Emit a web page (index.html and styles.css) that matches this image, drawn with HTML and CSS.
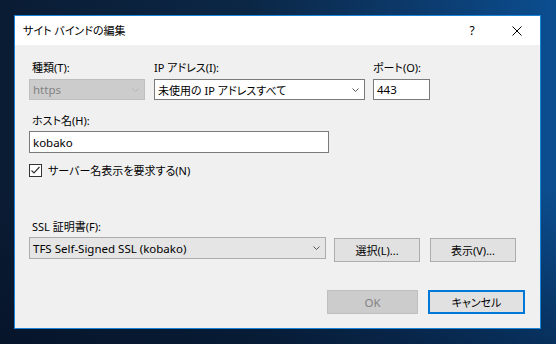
FILE: index.html
```html
<!DOCTYPE html>
<html lang="ja">
<head>
<meta charset="utf-8">
<title>サイト バインドの編集</title>
<link rel="stylesheet" href="styles.css">
</head>
<body>
<div class="desktop">
  <div class="dialog">
    <div class="titlebar">
      <span class="title">サイト バインドの編集</span>
      <span class="cap-btn help">?</span>
      <span class="cap-btn close">
        <svg width="10" height="10" viewBox="0 0 10 10"><path d="M0.5 0.5 L9.5 9.5 M9.5 0.5 L0.5 9.5" stroke="#000" stroke-width="1" fill="none"/></svg>
      </span>
    </div>
    <div class="content">
      <div class="row1">
        <div class="field f-kind">
          <div class="label indent">種類(T):</div>
          <div class="combo disabled">
            <span class="latin">https</span>
            <svg class="chev" width="7" height="4" viewBox="0 0 7 4"><polyline points="0.5,0.5 3.5,3.5 6.5,0.5" fill="none" stroke="#b4b4b4" stroke-width="1"/></svg>
          </div>
        </div>
        <div class="field f-ip">
          <div class="label">IP アドレス(I):</div>
          <div class="combo edit">
            <span>未使用の IP アドレスすべて</span>
            <svg class="chev" width="7" height="4" viewBox="0 0 7 4"><polyline points="0.5,0.5 3.5,3.5 6.5,0.5" fill="none" stroke="#555" stroke-width="1"/></svg>
          </div>
        </div>
        <div class="field f-port">
          <div class="label">ポート(O):</div>
          <div class="textbox small latin">443</div>
        </div>
      </div>

      <div class="label indent host-label">ホスト名(H):</div>
      <div class="textbox host latin">kobako</div>

      <div class="check-row">
        <span class="checkbox">
          <svg width="11" height="11" viewBox="0 0 11 11"><polyline points="1.5,5.5 4,8 9.5,2" fill="none" stroke="#333" stroke-width="1.2"/></svg>
        </span>
        <span class="check-text">サーバー名表示を要求する(N)</span>
      </div>

      <div class="label indent ssl-label">SSL 証明書(F):</div>
      <div class="ssl-row">
        <div class="combo readonly">
          <span class="latin">TFS Self-Signed SSL (kobako)</span>
          <svg class="chev" width="7" height="4" viewBox="0 0 7 4"><polyline points="0.5,0.5 3.5,3.5 6.5,0.5" fill="none" stroke="#555" stroke-width="1"/></svg>
        </div>
        <button class="btn btn-select">選択(L)...</button>
        <button class="btn btn-view">表示(V)...</button>
      </div>

      <div class="footer">
        <button class="btn btn-ok latin" disabled>OK</button>
        <button class="btn btn-cancel">キャンセル</button>
      </div>
    </div>
  </div>
</div>
</body>
</html>
```

FILE: styles.css
```css
html, body {
  margin: 0;
  padding: 0;
}

body {
  width: 556px;
  height: 344px;
  overflow: hidden;
  font-family: "Noto Sans", "Noto Sans CJK JP", sans-serif;
  font-size: 11px;
  font-feature-settings: "palt";
  color: #000;
  background:
    linear-gradient(to bottom, rgba(2, 12, 30, 0) 55%, rgba(2, 12, 30, 0.45) 100%),
    linear-gradient(to right, #0a1c34 0%, #0b2746 45%, #0c3a6c 75%, #0b4e90 100%);
}

.latin {
  font-size: 11.5px;
}

.desktop {
  padding: 15px 0 0 14px;
}

.dialog {
  box-sizing: border-box;
  width: 527px;
  height: 314px;
  border: 1px solid #1883d7;
  background: #f0f0f0;
  display: flex;
  flex-direction: column;
}

.titlebar {
  height: 29px;
  background: #fff;
  display: flex;
  align-items: center;
  flex: none;
}

.title {
  flex: 1;
  padding-left: 8px;
  line-height: 29px;
}

.cap-btn {
  display: flex;
  align-items: center;
  justify-content: center;
  height: 29px;
}

.help {
  width: 44px;
  font-size: 12px;
}

.close {
  width: 46px;
}

.content {
  flex: 1;
  padding: 15px 15px 0 14px;
}

.row1 {
  display: flex;
}

.label {
  height: 15px;
  line-height: 15px;
  white-space: nowrap;
}

.indent {
  padding-left: 3px;
}

.field .label {
  margin-bottom: 4px;
}

.f-kind { width: 116px; }
.f-ip { width: 211px; margin-left: 9px; }
.f-port { width: 57px; margin-left: 8px; }

.combo {
  box-sizing: border-box;
  height: 21px;
  border: 1px solid #7a7a7a;
  display: flex;
  align-items: center;
  justify-content: space-between;
  padding: 0 5px 0 3px;
  white-space: nowrap;
}

.combo.edit {
  background: #fff;
}

.combo.disabled {
  background: #cccccc;
  border-color: #bfbfbf;
  color: #838383;
}

.combo.readonly {
  width: 297px;
  height: 22px;
  background: #e5e5e5;
  border-color: #adadad;
}

.chev {
  flex: none;
}

.textbox {
  box-sizing: border-box;
  background: #fff;
  border: 1px solid #7a7a7a;
  padding: 0 3px;
  display: flex;
  align-items: center;
}

.textbox.small {
  height: 21px;
}

.host-label {
  margin-top: 13px;
}

.textbox.host {
  margin-top: 3px;
  width: 300px;
  height: 22px;
}

.check-row {
  margin-top: 11px;
  height: 13px;
  display: flex;
  align-items: center;
}

.checkbox {
  box-sizing: border-box;
  width: 13px;
  height: 13px;
  border: 1px solid #333;
  background: #fff;
  display: flex;
  align-items: center;
  justify-content: center;
}

.check-text {
  margin-left: 6px;
  line-height: 13px;
}

.ssl-label {
  margin-top: 42px;
}

.ssl-row {
  margin-top: 3px;
  display: flex;
  align-items: flex-start;
}

.btn {
  box-sizing: border-box;
  height: 24px;
  border: 1px solid #adadad;
  background: #e1e1e1;
  font-family: inherit;
  font-size: 11px;
  font-feature-settings: "palt";
  color: #000;
  padding: 0;
  margin: 0;
}

.btn-select {
  width: 86px;
  margin-left: 8px;
  margin-top: 1px;
}

.btn-view {
  width: 86px;
  margin-left: 10px;
  margin-top: 1px;
}

.footer {
  margin-top: 28px;
  display: flex;
  justify-content: flex-end;
}

.btn-ok {
  width: 91px;
  background: #cccccc;
  border-color: #bfbfbf;
  color: #838383;
  font-size: 11.5px;
}

.btn-cancel {
  width: 97px;
  margin-left: 10px;
  border: 2px solid #0078d7;
}
```
